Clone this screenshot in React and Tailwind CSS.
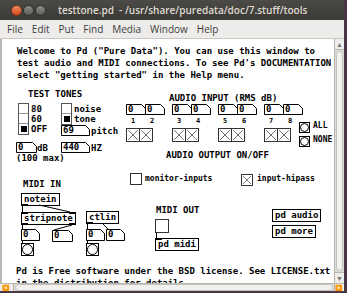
import React from 'react';

const mono = "font-['DejaVu_Sans_Mono',monospace] font-bold";

// plain comment text on the Pd canvas
const Txt = ({ className, children }) => (
    <div className={`absolute whitespace-pre text-[9px] leading-[12px] text-black ${mono} ${className}`}>
        {children}
    </div>
);

const Small = ({ className, children }) => (
    <div className={`absolute whitespace-pre text-[8px] leading-[10px] text-black ${mono} ${className}`}>
        {children}
    </div>
);

const Obj = ({ className, children, ins = [0], outs = [0] }) => (
    <div className={`absolute h-[13px] border border-black bg-white px-[2px] text-[9px] leading-[11px] text-black whitespace-pre ${mono} ${className}`}>
        {children}
        {ins.includes(0) && <span className="absolute -left-px -top-px h-[2px] w-[7px] bg-black" />}
        {ins.includes(1) && <span className="absolute -right-px -top-px h-[2px] w-[7px] bg-black" />}
        {outs.includes(0) && <span className="absolute -bottom-px -left-px h-[2px] w-[7px] bg-black" />}
        {outs.includes(1) && <span className="absolute -bottom-px -right-px h-[2px] w-[7px] bg-black" />}
    </div>
);

// number box with the cut corner; w/h only feed the outline drawing
const Num = ({ className, w, h = 11, value = '0' }) => (
    <div className={`shrink-0 ${className}`}>
        <svg width={w} height={h} className="absolute left-0 top-0">
            <polygon
                points={`0.5,0.5 ${w - 4.5},0.5 ${w - 0.5},4.5 ${w - 0.5},${h - 0.5} 0.5,${h - 0.5}`}
                fill="white"
                stroke="black"
            />
        </svg>
        <span className={`relative block pl-[2px] text-[9px] leading-[11px] text-black ${mono}`}>{value}</span>
    </div>
);

const Toggle = ({ className, on = false }) => (
    <div className={`shrink-0 border border-[#333] bg-white ${className}`}>
        {on && (
            <svg className="absolute inset-0 h-full w-full" viewBox="0 0 10 10" preserveAspectRatio="none">
                <line x1="1" y1="1" x2="9" y2="9" stroke="#666" strokeWidth="0.8" />
                <line x1="9" y1="1" x2="1" y2="9" stroke="#666" strokeWidth="0.8" />
            </svg>
        )}
    </div>
);

const Bang = ({ className }) => (
    <div className={`absolute flex items-center justify-center border border-black bg-white ${className}`}>
        <div className="h-full w-full rounded-full border border-black" />
    </div>
);

// vertical radio with its labels beside it
const VRadio = ({ className, labels, selected }) => (
    <div className={`absolute flex items-start gap-[2px] ${className}`}>
        <div className="flex w-[11px] flex-col border border-[#555] bg-white">
            {labels.map((l, i) => (
                <div key={l} className="flex h-[10px] items-center justify-center border-b border-[#999] last:border-b-0">
                    {i === selected && <div className="h-[6px] w-[6px] bg-black" />}
                </div>
            ))}
        </div>
        <div className={`mt-[1px] flex flex-col text-[9px] leading-[10px] text-black ${mono}`}>
            {labels.map(l => (
                <span key={l}>{l}</span>
            ))}
        </div>
    </div>
);

// one pair of input meters: two number boxes, channel numbers, two toggles
const InputPair = ({ a, b }) => (
    <div className="flex w-[39px] flex-col">
        <div className="flex">
            <Num className="relative h-[11px] w-[20px]" w={20} />
            <Num className="relative -ml-px h-[11px] w-[20px]" w={20} />
        </div>
        <div className={`flex h-[13px] pt-[2px] pl-[5px] text-[7px] leading-[8px] text-black ${mono}`}>
            <span className="w-[19px]">{a}</span>
            <span>{b}</span>
        </div>
        <div className="flex">
            <Toggle className="relative h-[14px] w-[14px]" on />
            <Toggle className="relative -ml-px h-[14px] w-[14px]" on />
        </div>
    </div>
);

const MENU = ['File', 'Edit', 'Put', 'Find', 'Media', 'Window', 'Help'];

const App = () => {
    return (
        <div className="flex h-[293px] w-[347px] flex-col overflow-hidden bg-[#4a3644]">
            <div className="flex w-[344px] flex-col">
                {/* title bar */}
                <div className="flex h-[20px] items-center bg-gradient-to-b from-[#4b4a46] to-[#3a3935] pl-[11px]">
                    <div className="flex items-center gap-[1px]">
                        <span className="h-[11px] w-[11px] rounded-full border border-[#7a3a1e] bg-gradient-to-b from-[#f58a5d] to-[#d9471a]" />
                        <span className="h-[11px] w-[11px] rounded-full border border-[#2e2d2a] bg-gradient-to-b from-[#8e8c86] to-[#5f5d58]" />
                        <span className="h-[11px] w-[11px] rounded-full border border-[#2e2d2a] bg-gradient-to-b from-[#8e8c86] to-[#5f5d58]" />
                    </div>
                    <span className="ml-[12px] whitespace-pre font-['Open_Sans',sans-serif] text-[10px] font-semibold text-[#dfdbd2]">
                        testtone.pd  - /usr/share/puredata/doc/7.stuff/tools
                    </span>
                </div>

                {/* menu bar */}
                <div className="flex h-[19px] items-center gap-[9px] border-b border-[#c9c7c2] bg-[#edecea] pl-[7px] font-['Open_Sans',sans-serif] text-[10px] text-[#3c3c3c]">
                    {MENU.map(m => (
                        <span key={m}>{m}</span>
                    ))}
                </div>

                {/* canvas + vertical scrollbar */}
                <div className="flex h-[244px]">
                    <div className="w-[2px] bg-[#b9b7b2]" />
                    <div className="relative flex-1 overflow-hidden bg-white">
                        <Txt className="left-[15px] top-[6px]">
                            {'Welcome to Pd ("Pure Data"). You can use this window to\ntest audio and MIDI connections. To see Pd\'s DOCUMENTATION\nselect "getting started" in the Help menu.'}
                        </Txt>

                        {/* test tones */}
                        <Txt className="left-[26px] top-[49px]">TEST TONES</Txt>
                        <VRadio className="left-[16px] top-[64px]" labels={['80', '60', 'OFF']} selected={2} />
                        <VRadio className="left-[59px] top-[64px]" labels={['noise', 'tone']} selected={1} />
                        <Num className="absolute left-[59px] top-[86px] h-[11px] w-[29px]" w={29} value="69" />
                        <Txt className="left-[89px] top-[86px]">pitch</Txt>
                        <Num className="absolute left-[14px] top-[103px] h-[11px] w-[21px]" w={21} />
                        <Txt className="left-[35px] top-[103px]">dB</Txt>
                        <Num className="absolute left-[59px] top-[103px] h-[11px] w-[29px]" w={29} value="440" />
                        <Txt className="left-[89px] top-[103px]">HZ</Txt>
                        <Txt className="left-[14px] top-[113px]">(100 max)</Txt>

                        {/* audio input */}
                        <Txt className="left-[167px] top-[53px]">AUDIO INPUT (RMS dB)</Txt>
                        <div className="absolute left-[124px] top-[65px] flex gap-[7px]">
                            <InputPair a="1" b="2" />
                            <InputPair a="3" b="4" />
                            <InputPair a="5" b="6" />
                            <InputPair a="7" b="8" />
                        </div>
                        <Bang className="left-[297px] top-[83px] h-[11px] w-[11px]" />
                        <Bang className="left-[297px] top-[97px] h-[11px] w-[11px]" />
                        <Small className="left-[311px] top-[82px]">ALL</Small>
                        <Small className="left-[311px] top-[96px]">NONE</Small>

                        {/* audio output */}
                        <Txt className="left-[164px] top-[110px]">AUDIO OUTPUT ON/OFF</Txt>
                        <Toggle className="absolute left-[128px] top-[134px] h-[12px] w-[12px]" />
                        <Small className="left-[143px] top-[135px]">monitor-inputs</Small>
                        <Toggle className="absolute left-[239px] top-[135px] h-[12px] w-[12px]" on />
                        <Small className="left-[255px] top-[135px]">input-hipass</Small>

                        {/* midi in */}
                        <Txt className="left-[21px] top-[139px]">MIDI IN</Txt>
                        <Obj className="left-[19px] top-[154px]" ins={[]} outs={[0]}>notein</Obj>
                        <Obj className="left-[19px] top-[173px]" ins={[0, 1]} outs={[0, 1]}>stripnote</Obj>
                        <Obj className="left-[84px] top-[172px]" ins={[]} outs={[0]}>ctlin</Obj>
                        <Num className="absolute left-[19px] top-[190px] h-[12px] w-[19px]" w={19} h={12} />
                        <Num className="absolute left-[50px] top-[191px] h-[12px] w-[21px]" w={21} h={12} />
                        <Num className="absolute left-[84px] top-[190px] h-[12px] w-[19px]" w={19} h={12} />
                        <Num className="absolute left-[104px] top-[190px] h-[12px] w-[19px]" w={19} h={12} />
                        <Bang className="left-[19px] top-[204px] h-[13px] w-[13px]" />
                        <Bang className="left-[84px] top-[204px] h-[13px] w-[13px]" />

                        {/* midi out */}
                        <Txt className="left-[154px] top-[165px]">MIDI OUT</Txt>
                        <Toggle className="absolute left-[153px] top-[180px] h-[14px] w-[14px]" />
                        <Obj className="left-[153px] top-[199px]" ins={[0]} outs={[]}>pd midi</Obj>
                        <Obj className="left-[270px] top-[170px]" ins={[]} outs={[]}>pd audio</Obj>
                        <Obj className="left-[270px] top-[186px]" ins={[]} outs={[]}>pd more</Obj>

                        {/* patch cords */}
                        <svg className="pointer-events-none absolute inset-0 h-full w-full">
                            <g stroke="black" strokeWidth="1">
                                <line x1="20.5" y1="166" x2="20.5" y2="173" />
                                <line x1="37" y1="166" x2="68" y2="173" />
                                <line x1="20.5" y1="186" x2="20.5" y2="190" />
                                <line x1="70" y1="186" x2="52" y2="191" />
                                <line x1="20.5" y1="202" x2="20.5" y2="204" />
                                <line x1="85.5" y1="184" x2="85.5" y2="190" />
                                <line x1="100" y1="184" x2="106" y2="190" />
                                <line x1="85.5" y1="202" x2="85.5" y2="204" />
                                <line x1="154.5" y1="194" x2="154.5" y2="199" />
                            </g>
                        </svg>

                        <Txt className="left-[14px] top-[226px]">
                            {'Pd is Free software under the BSD license. See LICENSE.txt\nin the distribution for details.'}
                        </Txt>
                    </div>

                    {/* vertical scrollbar */}
                    <div className="flex w-[10px] flex-col border-l border-[#b8b6b0] bg-[#dddbd7]">
                        <div className="flex h-[11px] items-center justify-center border-b border-[#b8b6b0] bg-[#eeedeb] text-[7px] leading-none text-[#777]">▲</div>
                        <div className="m-[1px] flex-1 rounded-sm border border-[#c3c1bc] bg-[#f2f1ef]" />
                        <div className="flex h-[11px] items-center justify-center border-t border-[#b8b6b0] bg-[#eeedeb] text-[7px] leading-none text-[#777]">▼</div>
                    </div>
                </div>

                {/* horizontal scrollbar */}
                <div className="flex h-[8px] border-t border-[#b8b6b0] bg-[#dddbd7]">
                    <div className="flex w-[14px] items-center justify-center border-r border-[#b8b6b0] bg-[#eeedeb] text-[6px] leading-none text-[#777]">◀</div>
                    <div className="mx-[1px] flex-1 rounded-sm border border-[#c3c1bc] bg-[#f2f1ef]" />
                    <div className="flex w-[10px] items-center justify-center border-l border-[#b8b6b0] bg-[#eeedeb] text-[6px] leading-none text-[#777]">▶</div>
                </div>
            </div>
        </div>
    );
};

export default App;
